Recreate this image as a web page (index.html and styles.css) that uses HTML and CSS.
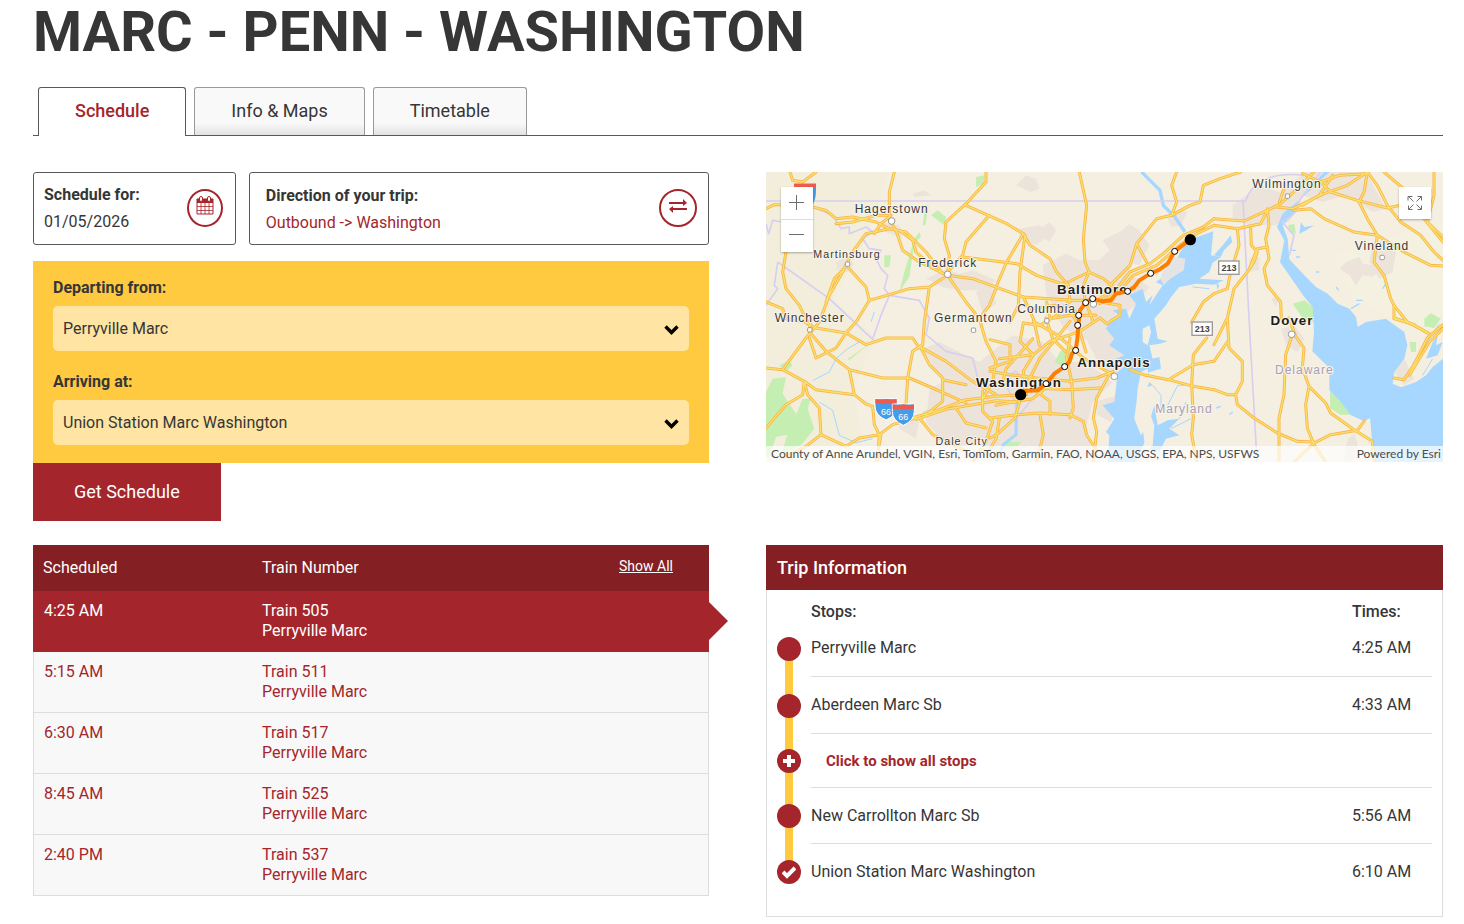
FILE: index.html
```
<!DOCTYPE html>
<html lang="en">
<head>
   <meta charset="UTF-8">
   <meta name="viewport" content="width=device-width, initial-scale=1.0">
   <title>MARC - PENN - WASHINGTON</title>
   <link rel="stylesheet" href="styles.css">
</head>
<body>
   <main class="page">
      <h1>MARC - PENN - WASHINGTON</h1>

      <nav class="tabs">
         <a class="tab active" href="#schedule">Schedule</a>
         <a class="tab" href="#info">Info &amp; Maps</a>
         <a class="tab" href="#timetable">Timetable</a>
      </nav>

      <div class="columns">
         <form class="trip-form">
            <div class="trip-options">
               <div class="option-box date-box">
                  <div class="option-text">
                     <label for="date">Schedule for:</label>
                     <input type="text" id="date" value="01/05/2026">
                  </div>
                  <button type="button" class="round-button calendar" aria-label="Choose date">
                     <svg width="18" height="20" viewBox="0 0 18 20">
                        <path d="M1 3h16v15H1z" fill="none" stroke="currentColor"/>
                        <path d="M1 3h16v4H1z" fill="currentColor"/>
                        <path d="M1 10.500h16M1 14.500h16M5 7v11M9 7v11M13 7v11" stroke="currentColor" stroke-width=".8"/>
                        <rect x="3.500" y=".5" width="3" height="5" rx="1.500" fill="#fff" stroke="currentColor"/>
                        <rect x="11.500" y=".5" width="3" height="5" rx="1.500" fill="#fff" stroke="currentColor"/>
                     </svg>
                  </button>
               </div>
               <div class="option-box direction-box">
                  <div class="option-text">
                     <strong>Direction of your trip:</strong>
                     <span class="direction">Outbound -&gt; Washington</span>
                  </div>
                  <button type="button" class="round-button" aria-label="Switch direction">
                     <svg width="18" height="14" viewBox="0 0 18 14">
                        <path d="M0 3h14V0l4 4-4 3V5H0zM18 9H4V7L0 10l4 4v-3h14z" fill="currentColor"/>
                     </svg>
                  </button>
               </div>
            </div>

            <div class="stations">
               <label for="from">Departing from:</label>
               <div class="select-wrap">
                  <select id="from">
                     <option>Perryville Marc</option>
                  </select>
                  <svg class="chevron" width="15" height="10" viewBox="0 0 15 10"><path d="M1.500 1.500l6 6 6-6" fill="none" stroke="#000" stroke-width="3.400"/></svg>
               </div>
               <label for="to">Arriving at:</label>
               <div class="select-wrap">
                  <select id="to">
                     <option>Union Station Marc Washington</option>
                  </select>
                  <svg class="chevron" width="15" height="10" viewBox="0 0 15 10"><path d="M1.500 1.500l6 6 6-6" fill="none" stroke="#000" stroke-width="3.400"/></svg>
               </div>
            </div>
            <button type="submit" class="submit">Get Schedule</button>
         </form>

         <section class="map">
            <svg class="map-canvas" viewBox="0 0 2031 870" preserveAspectRatio="xMidYMid slice">
               <defs>
                  <g id="roads">
                     <!-- Hagerstown, Frederick -->
                     <path d="M72 0L80 25 110 30 150 0M0 110L25 98 60 98M140 105L180 115 210 140 260 135 330 150 370 170 420 180 480 240 530 305M210 155L260 150 330 130 365 130"/>
                     <path d="M385 0L370 60 370 145 390 175 410 235 460 270 540 308M400 175L440 205 450 240 500 285M370 170L300 185 260 240 230 300 190 370 160 450 120 498 50 593 0 588M325 185L345 155 375 130M235 290L205 320 180 390"/>
                     <path d="M660 0L660 30 600 95 540 150 535 200 550 250 545 305M600 100L722 155 772 185 792 220 852 260 872 300 907 340 912 390M670 130L600 210 590 250 545 300M590 255L752 275 812 310 872 330 907 340"/>
                     <path d="M60 240L50 300 60 350 100 400 130 460M0 390L50 410 60 440 120 450M240 280L300 345 310 385 270 450 240 483M310 385L380 365 430 350 490 345 545 310 600 390 640 440 660 508 690 568M490 345L475 450 470 518M545 310L620 320 772 375 922 385 980 385M690 350L670 400 640 440"/>
                     <!-- Baltimore -->
                     <path d="M772 185L722 270 692 340M777 190L762 300 757 400 732 450M940 0L962 100 952 200 957 270 969 300 952 340 957 385 982 450M907 330L969 300 1012 320 1042 345"/>
                     <path d="M1232 0L1217 40 1232 90 1217 130 1172 140 1112 215 1142 270M1112 215L1092 280 1032 340M1217 130L1272 100 1302 90 1312 40 1362 20 1424 0"/>
                     <path d="M1344 140L1312 165 1252 190 1192 245 1152 275 1092 300 1052 350 992 385M1344 160L1292 185 1247 215 1172 280 1102 310 1067 350 1000 395"/>
                     <path d="M772 375L802 440 820 520M912 385L872 430 822 460 772 453M972 385L1062 400 1062 430 1022 455 1002 438M902 400L932 450 942 480 960 540M842 390L852 440 912 430 990 430M790 410L870 400 930 420M912 448L872 498 822 558 792 618 767 668"/>
                     <path d="M1344 365L1312 390 1277 450"/>
                     <!-- Wilmington, New Jersey -->
                     <path d="M1344 140L1434 147 1504 115 1544 95 1594 50 1644 0M1344 160L1414 170 1484 155 1504 115M1504 110L1509 160 1499 200 1509 260 1494 290 1504 340 1544 390 1546 440M1524 104L1580 110 1674 65 1744 40 1804 0M1610 100L1660 70 1700 10"/>
                     <path d="M1584 115L1634 110 1674 140 1764 180 1834 190 1914 240 1994 280 2031 282M1610 5L1664 30 1694 60 1774 85 1864 108 1904 100M1804 0L1794 60 1779 90 1804 140 1834 190 1824 270 1854 310 1874 380 1884 400 1924 450 1990 485"/>
                     <path d="M1804 0L1834 40 1864 100 1904 150 1964 190 2004 240 2031 265M1854 0L1924 60 1974 140 2031 210M2004 0L2004 70 1984 150 2031 195M1884 400L1884 440 1944 458M1664 30L1720 10 1804 5"/>
                     <path d="M1414 170L1419 220 1394 300 1384 350 1344 365M1454 170L1456 220 1474 240 1464 270 1444 300 1404 350 1384 438 1389 528 1429 568 1429 628 1409 668 1414 698 1464 738 1534 783 1594 808 1644 810M1504 225L1474 230 1450 290M1384 438L1344 518M1344 653L1384 668 1409 668M1554 50L1540 90"/>
                     <!-- Winchester, Dale City -->
                     <path d="M135 438L130 480 180 538 250 593 350 618 430 618 500 648 600 693M50 593L115 628 150 653 200 660 265 668 300 696 320 703M250 593L265 668M115 628L110 668 60 698 0 768M115 628L125 668 160 708 165 788 120 823 50 858"/>
                     <path d="M165 788L240 823 280 798 340 788 380 758 450 738M320 703L325 758 340 788 335 870M345 788L330 870M300 518L240 483 150 468 120 453M300 518L360 498 440 498 460 528M240 483L210 528 150 558 130 498"/>
                     <path d="M470 518L440 538 425 618 420 698M460 523L540 568 620 628 690 668M465 528L490 578 530 618 530 688 480 728M530 623L600 638M440 738L520 713 600 683 690 673 767 668M450 742L540 712 690 686 750 690"/>
                     <path d="M460 738L500 788 600 838M570 708L600 753 660 768M650 658L650 718 680 748 660 808 620 870M690 568L680 630 650 680"/>
                     <!-- Washington, Annapolis -->
                     <path d="M672 503L732 518 732 568 672 588M772 453L762 508 802 548 772 598 782 668M802 448L872 488 952 558 1032 603M1002 438L942 478 852 508 802 548 700 560M912 498L902 558 917 628 922 708 912 738M672 598L732 608 812 618 912 628 992 618 1042 598"/>
                     <path d="M1032 603L992 678 982 738 992 778 982 870M672 738L752 728 822 723 912 728 952 748 962 788 992 838M767 668L747 738 692 788 672 798M822 728L832 788 812 870M812 658L852 688 852 728M812 648L912 653 1002 648M672 640L710 630 720 590 800 500M690 700L740 690 800 680 850 640M700 740L690 800 672 830M840 438L860 500 900 540"/>
                     <!-- Eastern Shore, Delaware -->
                     <path d="M1092 593L1132 608 1207 623 1282 578 1344 568 1384 510M1207 623L1282 643 1344 653M1322 498L1282 548 1277 638 1282 738 1277 788 1292 870"/>
                     <path d="M1579 488L1559 548 1554 668 1539 738 1539 870M1569 438L1589 493 1614 528 1609 588 1629 643 1679 693 1694 723 1764 773 1819 808 1824 870M1629 643L1619 698 1624 768 1644 818 1679 870M1644 813L1584 870M1644 813L1694 788 1774 775 1794 748"/>
                     <path d="M2031 458L1984 498 1944 578 1914 623 1884 618M2031 470L1990 510 1930 610M1884 438L1944 458 1984 483"/>
                  </g>
               </defs>

               <rect width="2031" height="870" fill="#f5efe2"/>
               <path d="M0 0H370L300 200 200 380 330 500 260 650 300 870H0z" fill="#f2eedb"/>
               <path d="M1700 250L2031 150V480L1900 450 1760 380z" fill="#f4f1e0"/>

               <g fill="#ece3db">
                  <path d="M750 40l30-30 30 10 10 30-25 10zM480 320l60-30 40 15 40-10 70 30-30 30-80 0-50-10zM340 150l60 10 10 40-50-20zM210 270l30-15 25 20-20 25-30-5zM630 360l50-25 10 60-40 30zM440 65l35-10 20 15-50 5zM760 170l60-10 30 30-40 30-50-20zM810 180l40-30 20 25-20 35z"/>
                  <path d="M830 280l70-35 40 20 60 0 50-50 40 30 0 60 60 40-40 50-30 30 20 60-50 20-40-30-60 30-60-40-50-100zM1010 205l60-30 20-20 30 20 30 45-30 60-70-20zM1205 140l30-25 30 5-20 40-30 5z"/>
                  <path d="M470 530l50-20 120 60 100-80 90 20 50 60 80 0 80 60-60 60-20 80 20 80-100 30-90-60-70 40-90-50-80 20-70-80 10-100 40-20zM400 720l60 20-10 60-50-30zM960 500l60-60 40 30 20 60 20 60-40 30-60-40zM985 690l70-20-20 80-40-20z"/>
                  <path d="M1400 100l80-60 60 20 80-60h180l60 110-40 10-80-50-70 20-60-20-40 80-50 10-70 0-50-20zM1740 270l40-15 10 20 60 10-30 30-30-5-20 30-20-30-30-20zM1820 210l40-10 30 40-10 60-40 20-30-50zM1545 470l40-10 30 40-20 40-35-20zM1745 800l20-15 10 30-15 55h-30zM1885 600l30-40 30 60-30 20zM1450 260l30-5 0 40-30 5zM1515 380l25-5-10 30z"/>
               </g>
               <g fill="#c5efb2">
                  <path d="M0 660l20-40 40-5-10 50 40 60-10 60-50 10-20 60H0zM60 800l50-120 25 0-10 30 20 60-40 50-60 30z"/>
                  <path d="M495 130l20-15 25 20-5 25zM630 15l25-5 0 25-25 10zM355 250l20 0-5 35-15 0zM445 200l15-20 5 15-20 20-15 100-30 45 15-60zM470 160l8-60 10 0-10 60zM40 580l30-15 10 15-20 20zM470 720l20-10-10 20zM245 560l60-40-55 45z"/>
                  <path d="M865 570l20-35 30-3 8 30-25 25zM1580 395l35-10 25 20 8 45-30 0zM1692 658l30 20 35 50-35 0-30-20zM1565 160l20-5 5 30-15-5zM1980 435l15-12 25 15-20 10zM1975 438h50l-20 30-30-5zM715 810l50 0-10 15-50 0zM1930 510l20 0 0 30-15 0z"/>
               </g>

               <g fill="#a7d7ff">
                  <path d="M1342 178L1335 250 1365 255 1340 272 1330 300 1300 320 1374 325 1344 338 1290 335 1240 345 1215 375 1200 400 1165 440 1175 500 1205 508 1182 515 1150 520 1160 560 1180 555 1185 590 1150 600 1140 620 1160 640 1130 650 1110 700 1105 740 1125 790 1150 750 1165 700 1175 760 1205 745 1240 740 1210 770 1240 790 1200 800 1180 840 1150 830 1140 800 1110 870 1025 870 1030 790 1020 780 1045 740 1010 700 1045 690 1055 600 1080 580 1050 560 1075 550 1030 520 1045 500 1020 470 1035 440 1060 430 1040 415 1080 410 1090 440 1110 395 1090 370 1130 350 1140 390 1160 370 1150 400 1190 340 1170 330 1200 310 1230 270 1240 245 1265 205z"/>
                  <path d="M1674 0L1600 85 1550 125 1533 165 1555 205 1542 270 1580 325 1615 375 1640 405 1644 480 1639 538 1690 588 1690 655 1720 685 1755 730 1795 748 1812 738 1824 870 2031 870 2031 560 2000 585 1980 610 1950 630 1905 646 1880 635 1885 600 1915 560 1924 520 1915 480 1880 455 1860 440 1800 450 1775 465 1770 435 1750 410 1715 395 1685 365 1650 345 1615 310 1570 262 1565 200 1550 160 1590 120 1600 85 1690 0z"/>
                  <path d="M1344 250l30-35 20-25 5 20-25 25-10 20zM1605 150l10 15 30-5-25 15-20 10zM1980 560l20-50 15-20-5 30 20-10-15 40zM1350 330l10 10-5 15zM1100 480l20 0 10 30-25-5z"/>
               </g>
               <g fill="#f5efe2">
                  <path d="M1125 600l20-10 5 40-15 40-10 50-15-10 5-60zM1130 470l20-10 5 20-10 40-15-10z"/>
                  <path d="M1130 770l20-50 15 40-5 60-20 20z"/>
               </g>
               <path d="M1198 275l30-20 30 5-5 35-40 25-20 20-10-20z" fill="#e4e4e4"/>
               <g fill="none" stroke="#a7d7ff" stroke-width="5">
                  <path d="M1127 0L1152 25 1182 55 1192 100 1227 135 1257 180" stroke-width="10"/>
                  <path d="M752 688L750 788 712 818 690 870" stroke-width="9"/>
                  <path d="M140 626L190 600 210 560 245 530 280 510M160 690L200 715 220 790 270 812 320 800M315 450l10-30M1240 740l20-50M1215 770l60-30M1205 700l30-60 20 0M1160 640l25 30 0 40M1280 345l50 5M1940 575l40-60 40-60M1970 610l30-50" stroke-width="3"/>
                  <path d="M1575 235h15M1590 255h12M1710 345l8 10M1770 385h20M1650 300h10M1850 350l10-15M1350 708l15-5M1390 728l10-8M1780 395l-25 15" stroke-width="4"/>
               </g>

               <g fill="none" stroke="#d6cff0" stroke-width="5" stroke-linejoin="round">
                  <path d="M0 87H1439C1455 30 1520 -2 1614 10M1431 87L1449 438 1473 870M1664 0L1604 80 1579 130 1549 150 1584 190 1570 250"/>
                  <path d="M0 155L8 185 20 145 50 150M140 105L200 130 225 170 250 165 250 185 300 165 320 180 290 200 310 230 345 235 330 260 345 290 365 310 355 350 370 370 460 385 490 438 480 488 540 538 620 558 635 618M35 270L190 380 320 502 345 430 370 370M35 270L25 340 35 350 0 400"/>
                  <path d="M712 628L747 598 822 653 752 738 747 688z"/>
               </g>

               <g fill="none" stroke-linejoin="round" stroke-linecap="round">
                  <use href="#roads" stroke="#f9b548" stroke-width="9"/>
                  <use href="#roads" stroke="#fbe069" stroke-width="4"/>
               </g>

               <g fill="#fff" stroke="#999" stroke-width="3">
                  <circle cx="377" cy="147" r="10"/><circle cx="545" cy="307" r="10"/><circle cx="982" cy="396" r="10"/><circle cx="1045" cy="613" r="10"/><circle cx="1577" cy="487" r="10"/>
                  <rect x="238" y="270" width="13" height="13" rx="3"/><rect x="125" y="467" width="13" height="13" rx="3"/><rect x="616" y="468" width="13" height="13" rx="3"/><rect x="836" y="440" width="13" height="13" rx="3"/><rect x="1558" y="66" width="13" height="13" rx="3"/><rect x="1842" y="250" width="13" height="13" rx="3"/>
               </g>

               <!-- route shields -->
               <g class="shield">
                  <path d="M84 35h66v20q0 50-33 60-33-10-33-60z" fill="#459de9"/><path d="M84 35h66v12H84z" fill="#ee5b4e"/>
                  <path d="M327 680h66v22q0 28-33 42-33-14-33-42z" fill="#459de9" stroke="#fff" stroke-width="3"/><path d="M328 681q15 5 32 0 17 5 32 0v14h-64z" fill="#ee5b4e"/>
                  <text x="360" y="728">66</text>
                  <path d="M379 696h66v22q0 28-33 42-33-14-33-42z" fill="#459de9" stroke="#fff" stroke-width="3"/><path d="M380 697q15 5 32 0 17 5 32 0v14h-64z" fill="#ee5b4e"/>
                  <text x="412" y="743">66</text>
               </g>
               <g class="state-route">
                  <rect x="1358" y="267" width="61" height="40"/><text x="1389" y="298">213</text>
                  <rect x="1278" y="450" width="61" height="40"/><text x="1309" y="481">213</text>
               </g>

               <g class="place">
                  <text x="377" y="124">Hagerstown</text>
                  <text x="545" y="284">Frederick</text>
                  <text x="131" y="450">Winchester</text>
                  <text x="622" y="450">Germantown</text>
                  <text x="842" y="422">Columbia</text>
                  <text x="1563" y="49">Wilmington</text>
                  <text x="1848" y="233">Vineland</text>
                  <text x="243" y="257" class="small">Martinsburg</text>
                  <text x="587" y="820" class="small">Dale City</text>
                  <text x="979" y="366" class="city">Baltimore</text>
                  <text x="1044" y="586" class="city">Annapolis</text>
                  <text x="759" y="646" class="city">Washington</text>
                  <text x="1578" y="459" class="city">Dover</text>
                  <text x="1615" y="606" class="state">Delaware</text>
                  <text x="1254" y="722" class="state">Maryland</text>
               </g>

               <path d="M1272 203L1226 238 1205 275 1180 293 1154 304 1120 325 1105 345 1085 358 1050 365 1035 385 1010 388 980 380 959 392 942 415 937 460 934 500 929 535 918 545 910 570 896 584 865 605 840 635 815 655 764 658" fill="none" stroke="#ff7d00" stroke-width="12" stroke-linejoin="round"/>
               <g fill="#fff" stroke="#000" stroke-width="3">
                  <circle cx="1226" cy="238" r="9"/><circle cx="1154" cy="304" r="9"/><circle cx="1085" cy="358" r="9"/><circle cx="980" cy="380" r="9"/><circle cx="959" cy="392" r="9"/><circle cx="938" cy="430" r="9"/><circle cx="935" cy="460" r="9"/><circle cx="929" cy="535" r="9"/><circle cx="896" cy="584" r="9"/><circle cx="840" cy="635" r="9"/>
               </g>
               <circle cx="1273" cy="203" r="17"/><circle cx="764" cy="668" r="17"/>
            </svg>

            <div class="zoom-buttons">
               <button type="button" aria-label="Zoom in"><svg width="16" height="16" viewBox="0 0 16 16"><path d="M0 7.500h15M7.500 0v15" stroke="#6e6e6e"/></svg></button>
               <button type="button" aria-label="Zoom out"><svg width="16" height="16" viewBox="0 0 16 16"><path d="M0 6.500h15" stroke="#6e6e6e"/></svg></button>
            </div>
            <button type="button" class="fullscreen" aria-label="Full screen">
               <svg width="16" height="16" viewBox="0 0 16 16" fill="none" stroke="#6e6e6e"><path d="M1 5.500V1.500H5.500M10.500 1.500H14.500V5.500M14.500 10.500V14.500H10.500M5.500 14.500H1.500V10.500M1.500 1.500l5 5M14.500 1.500l-5 5M14.500 14.500l-5-5M1.500 14.500l5-5"/></svg>
            </button>
            <div class="attribution">
               <span>County of Anne Arundel, VGIN, Esri, TomTom, Garmin, FAO, NOAA, USGS, EPA, NPS, USFWS</span>
               <span>Powered by Esri</span>
            </div>
         </section>

         <table class="results">
            <thead>
               <tr>
                  <th class="col-time">Scheduled</th>
                  <th>Train Number</th>
                  <th class="col-all"><a href="#all">Show All</a></th>
               </tr>
            </thead>
            <tbody>
               <tr class="selected"><td>4:25 AM</td><td>Train 505<br>Perryville Marc</td><td></td></tr>
               <tr><td>5:15 AM</td><td>Train 511<br>Perryville Marc</td><td></td></tr>
               <tr><td>6:30 AM</td><td>Train 517<br>Perryville Marc</td><td></td></tr>
               <tr><td>8:45 AM</td><td>Train 525<br>Perryville Marc</td><td></td></tr>
               <tr><td>2:40 PM</td><td>Train 537<br>Perryville Marc</td><td></td></tr>
            </tbody>
         </table>

         <section class="trip-info">
            <h2>Trip Information</h2>
            <table class="stops">
               <thead>
                  <tr><th class="col-marker"></th><th>Stops:</th><th class="col-stop-time">Times:</th></tr>
               </thead>
               <tbody>
                  <tr><td class="marker"><span class="dot"></span></td><td>Perryville Marc</td><td>4:25 AM</td></tr>
                  <tr><td class="marker"><span class="dot"></span></td><td>Aberdeen Marc Sb</td><td>4:33 AM</td></tr>
                  <tr class="more">
                     <td class="marker"><span class="dot"><svg width="14" height="14" viewBox="0 0 14 14"><path d="M7 1v12M1 7h12" stroke="#fff" stroke-width="4"/></svg></span></td>
                     <td colspan="2"><button type="button">Click to show all stops</button></td>
                  </tr>
                  <tr><td class="marker"><span class="dot"></span></td><td>New Carrollton Marc Sb</td><td>5:56 AM</td></tr>
                  <tr><td class="marker"><span class="dot"><svg width="14" height="14" viewBox="0 0 14 14"><path d="M1 7l4 4 8-8" fill="none" stroke="#fff" stroke-width="4"/></svg></span></td><td>Union Station Marc Washington</td><td>6:10 AM</td></tr>
               </tbody>
            </table>
         </section>
      </div>
   </main>
</body>
</html>
```
FILE: styles.css
```
* {
   box-sizing: border-box;
}

body {
   margin: 0;
   font-family: Roboto, "Liberation Sans", sans-serif;
   font-size: 16px;
   line-height: 20px;
   color: #363636;
   background-color: #fff;
}

button,
input,
select {
   font: inherit;
   color: inherit;
}

button {
   padding: 0;
   border: 0;
   cursor: pointer;
}

.page {
   padding: 0 21px 7px 33px;
}

h1 {
   margin: 0;
   font-size: 56px;
   line-height: 64px;
   font-weight: bold;
}

/* Tabs */
.tabs {
   display: flex;
   gap: 8px;
   margin-top: 23px;
   padding-left: 5px;
   border-bottom: 1px solid #58595b;
}

.tab {
   padding: 13px 36px 14px;
   border: 1px solid #999;
   border-bottom: 0;
   border-radius: 3px 3px 0 0;
   background: linear-gradient(#f9f9f9 75%, #e2e2e2);
   color: #363636;
   font-size: 18px;
   text-decoration: none;
}

.tab.active {
   margin-bottom: -1px;
   border-color: #58595b;
   background: #fff;
   color: #a4262c;
   font-weight: 500;
}

.columns {
   display: grid;
   grid-template-columns: 676fr 677fr;
   column-gap: 57px;
   row-gap: 24px;
   align-items: start;
   margin-top: 36px;
}

/* Trip form */
.trip-options {
   display: flex;
   gap: 13px;
}

.option-box {
   display: flex;
   justify-content: space-between;
   align-items: center;
   height: 73px;
   border: 1px solid #58595b;
   border-radius: 3px;
}

.date-box {
   width: 30%;
   padding: 0 12px 0 10px;
}

.direction-box {
   flex: 1;
   padding: 0 11px 0 16px;
}

.option-text {
   display: flex;
   flex-direction: column;
   gap: 6px;
   min-width: 0;
}

.direction-box .option-text {
   gap: 7px;
   padding-top: 2px;
}

.option-text label,
.option-text strong,
.stations label {
   font-weight: bold;
}

.option-text input {
   width: 110px;
   height: 22px;
   padding: 0;
   border: 0;
   background: none;
}

.direction {
   color: #a4262c;
}

.round-button {
   display: flex;
   justify-content: center;
   align-items: center;
   flex: none;
   width: 38px;
   height: 38px;
   margin-bottom: 1px;
   padding-bottom: 4px;
   border: 2px solid #a4262c;
   border-radius: 50%;
   background: none;
   color: #a4262c;
}

.calendar {
   width: 36px;
}

.stations {
   margin-top: 16px;
   padding: 17px 20px 18px;
   background-color: #ffc940;
}

.stations label {
   display: block;
   margin-bottom: 8px;
}

.select-wrap {
   position: relative;
   margin-bottom: 21px;
}

.select-wrap:last-child {
   margin-bottom: 0;
}

.select-wrap select {
   display: block;
   width: 100%;
   height: 45px;
   padding: 0 40px 0 10px;
   border: 0;
   border-radius: 5px;
   background-color: #ffe4a3;
   appearance: none;
}

.chevron {
   position: absolute;
   top: 19px;
   right: 10px;
   pointer-events: none;
}

.submit {
   display: block;
   height: 58px;
   padding: 0 41px;
   background-color: #a4262c;
   color: #fff;
   font-size: 18px;
}

/* Map */
.map {
   position: relative;
   height: 290px;
   overflow: hidden;
}

.map-canvas {
   display: block;
   width: 100%;
   height: 100%;
   font-family: "Liberation Sans", Arial, sans-serif;
   text-anchor: middle;
}

.place {
   fill: #383838;
   stroke: #f8f4ea;
   stroke-width: 6px;
   stroke-linejoin: round;
   paint-order: stroke;
   font-size: 36px;
   letter-spacing: 3px;
}

.place .small {
   font-size: 32px;
}

.place .city {
   fill: #1c1c1c;
   font-size: 40px;
   font-weight: bold;
}

.place .state {
   fill: #a79fb5;
   font-size: 36px;
}

.shield {
   fill: #fff;
   font-size: 27px;
}

.state-route {
   fill: #444;
   font-size: 27px;
   font-weight: bold;
}

.state-route rect {
   fill: #fff;
   stroke: #999;
   stroke-width: 4px;
}

.zoom-buttons {
   position: absolute;
   top: 15px;
   left: 15px;
   display: flex;
   flex-direction: column;
   gap: 1px;
   background-color: #ddd;
   box-shadow: 0 1px 2px rgba(0, 0, 0, 0.3);
}

.zoom-buttons button,
.fullscreen {
   display: flex;
   justify-content: center;
   align-items: center;
   width: 32px;
   height: 32px;
   background-color: #fff;
}

.fullscreen {
   position: absolute;
   top: 15px;
   right: 12px;
   box-shadow: 0 1px 2px rgba(0, 0, 0, 0.3);
}

.attribution {
   position: absolute;
   right: 0;
   bottom: 0;
   left: 0;
   display: flex;
   justify-content: space-between;
   padding: 0 2px 0 5px;
   background-color: rgba(255, 255, 255, 0.7);
   color: #4c4c4c;
   font-family: Lato, sans-serif;
   font-size: 12px;
   line-height: 16px;
}

/* Train list */
.results {
   width: 100%;
   border-collapse: separate;
   border-spacing: 0;
   table-layout: fixed;
}

.results th,
.results td {
   padding: 10px 10px 10px 0;
   text-align: left;
   vertical-align: top;
   font-weight: normal;
}

.results th {
   height: 46px;
   padding-top: 13px;
   background-color: #841f23;
   color: #fff;
}

.results th:first-child,
.results td:first-child {
   padding-left: 10px;
}

.results td {
   border-bottom: 1px solid #ddd;
   background-color: #f8f8f8;
   color: #a4262c;
}

.results td:first-child {
   border-left: 1px solid #ddd;
}

.results td:last-child {
   position: relative;
   border-right: 1px solid #ddd;
}

.results .selected td {
   border-color: #a4262c;
   background-color: #a4262c;
   color: #fff;
}

.selected td:last-child::after {
   content: "";
   position: absolute;
   top: 10px;
   left: 100%;
   border: 20px solid transparent;
   border-left-color: #a4262c;
   border-right: 0;
}

.col-time {
   width: 229px;
}

.col-all {
   width: 90px;
   font-size: 14px;
}

.results .col-all {
   padding-top: 11px;
}

.col-all a {
   color: #fff;
}

/* Trip information */
.trip-info {
   padding-bottom: 16px;
   border: 1px solid #ddd;
   border-top: 0;
}

.trip-info h2 {
   margin: 0 -1px;
   padding: 13px 11px 12px;
   background-color: #841f23;
   color: #fff;
   font-size: 18px;
   line-height: 20px;
   font-weight: 500;
}

.stops {
   width: calc(100% - 20px);
   margin: 0 10px;
   border-collapse: separate;
   border-spacing: 0;
   table-layout: fixed;
}

.stops th {
   height: 30px;
   padding: 14px 0 0;
   line-height: 16px;
   font-weight: 500;
   text-align: left;
}

.stops td {
   height: 57px;
   padding: 0;
   border-bottom: 1px solid #ddd;
}

.stops .marker,
.stops tr:last-child td {
   border-bottom: 0;
}

.col-marker {
   width: 34px;
}

.col-stop-time {
   width: 80px;
}

.marker {
   position: relative;
}

/* line down to the next stop */
.marker::before {
   content: "";
   position: absolute;
   top: 50%;
   left: 8px;
   width: 8px;
   height: 100%;
   background-color: #ffc940;
}

.stops tr:last-child .marker::before {
   display: none;
}

.dot {
   position: relative;
   display: flex;
   justify-content: center;
   align-items: center;
   width: 24px;
   height: 24px;
   border-radius: 50%;
   background-color: #a4262c;
}

.stops .more td {
   height: 54px;
}

.stops .more ~ tr td {
   height: 56px;
}

.more button {
   margin-left: 15px;
   background: none;
   color: #a4262c;
   font-size: 15px;
   font-weight: bold;
}
```
